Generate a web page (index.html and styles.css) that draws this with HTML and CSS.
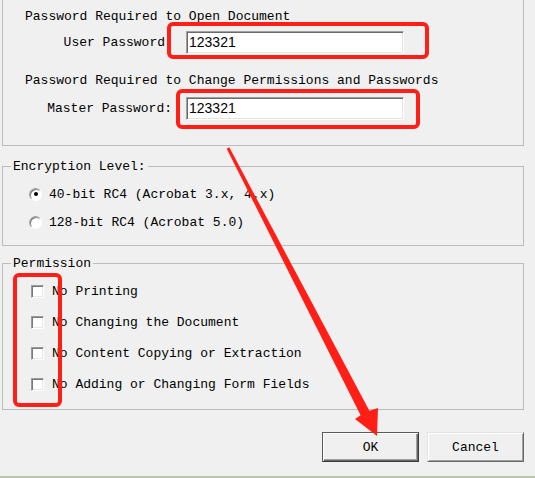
FILE: index.html
```html
<!DOCTYPE html>
<html>
<head>
<meta charset="utf-8">
<link rel="stylesheet" href="styles.css">
</head>
<body>
<div class="dialog">
  <section class="group group-pw">
    <div class="heading">Password Required to Open Document</div>
    <div class="field-row">
      <label class="field-label label-user">User Password</label>
      <div class="text-input">123321</div>
    </div>
    <div class="heading heading-2">Password Required to Change Permissions and Passwords</div>
    <div class="field-row field-row-master">
      <label class="field-label label-master">Master Password:</label>
      <div class="text-input">123321</div>
    </div>
  </section>

  <fieldset class="group group-enc">
    <legend>Encryption Level:</legend>
    <div class="option-row"><span class="radio checked"></span><span>40-bit RC4 (Acrobat 3.x, 4.x)</span></div>
    <div class="option-row"><span class="radio"></span><span>128-bit RC4 (Acrobat 5.0)</span></div>
  </fieldset>

  <fieldset class="group group-perm">
    <legend>Permission</legend>
    <div class="check-row"><span class="checkbox"></span><span>No Printing</span></div>
    <div class="check-row"><span class="checkbox"></span><span>No Changing the Document</span></div>
    <div class="check-row"><span class="checkbox"></span><span>No Content Copying or Extraction</span></div>
    <div class="check-row"><span class="checkbox"></span><span>No Adding or Changing Form Fields</span></div>
  </fieldset>

  <div class="buttons">
    <button class="btn btn-default">OK</button>
    <button class="btn">Cancel</button>
  </div>
</div>
<div class="footer-line"></div>

<svg class="annotations" width="535" height="478" viewBox="0 0 535 478">
  <rect x="169" y="24" width="258" height="33" rx="4" ry="4" fill="none" stroke="#ff1f17" stroke-width="4"/>
  <rect x="178" y="91" width="240" height="36" rx="4" ry="4" fill="none" stroke="#ff1f17" stroke-width="4"/>
  <rect x="15" y="275" width="45" height="130" rx="4" ry="4" fill="none" stroke="#ff1f17" stroke-width="4"/>
  <polygon fill="#ff1f17" points="229.3,147.3 369.4,410.7 378,408 377,436 355,419 360.6,415.3 226.7,148.7"/>
</svg>
</body>
</html>
```

FILE: styles.css
```css
* {
  box-sizing: border-box;
}

html, body {
  margin: 0;
  padding: 0;
}

body {
  width: 535px;
  height: 478px;
  overflow: hidden;
  position: relative;
  background: #f0f0f0;
  font-family: "Liberation Mono", "DejaVu Sans Mono", monospace;
  font-size: 13px;
  line-height: 15px;
  color: #000;
  display: flex;
  flex-direction: column;
}

.dialog {
  flex: 1;
  width: 524px;
  padding-left: 2px;
  display: flex;
  flex-direction: column;
}

.group {
  width: 522px;
  margin: 0;
  border: 1px solid #bcbcbc;
  min-inline-size: 0;
}

.group-pw {
  margin-top: -20px;
  padding: 28px 0 25px 0;
}

.heading {
  margin-left: 22px;
  height: 15px;
  white-space: nowrap;
}

.heading-2 {
  margin-top: 19px;
}

.field-row {
  display: flex;
  align-items: center;
  margin-top: 7px;
}

.field-row-master {
  margin-top: 9px;
}

.field-label {
  width: 183px;
  text-align: right;
  white-space: nowrap;
}

.label-user {
  padding-right: 21px;
}

.label-master {
  padding-right: 14px;
}

.text-input {
  width: 218px;
  height: 23px;
  background: #fff;
  border: 1px solid;
  border-color: #a0a0a0 #ffffff #ffffff #a0a0a0;
  box-shadow: inset 1px 1px 0 #6a6a6a, inset -1px -1px 0 #e3e3e3;
  font-family: "Liberation Sans", Arial, sans-serif;
  font-size: 14px;
  line-height: 21px;
  padding-left: 2px;
}

fieldset.group {
  padding: 10px 8px 13px 8px;
}

fieldset.group legend {
  padding: 0 2px;
  line-height: 15px;
  height: 15px;
}

.group-enc {
  margin-top: 13px;
}

.group-perm {
  margin-top: 10px;
}

fieldset.group-perm {
  padding-bottom: 15px;
}

.option-row,
.check-row {
  display: flex;
  align-items: center;
  height: 20px;
  white-space: nowrap;
}

.option-row {
  padding-left: 18px;
  gap: 7px;
}

.option-row + .option-row {
  margin-top: 8px;
}

.check-row {
  padding-left: 20px;
  gap: 8px;
}

.check-row + .check-row {
  margin-top: 11px;
}

.radio {
  width: 13px;
  height: 13px;
  border-radius: 50%;
  background: #fff;
  border: 1px solid;
  border-color: #a0a0a0 #ffffff #ffffff #a0a0a0;
  box-shadow: inset 1px 1px 0 #7a7a7a;
  display: flex;
  align-items: center;
  justify-content: center;
  flex: none;
}

.radio.checked::after {
  content: "";
  width: 4px;
  height: 4px;
  border-radius: 50%;
  background: #000;
}

.checkbox {
  width: 13px;
  height: 13px;
  background: #fff;
  border: 1px solid;
  border-color: #9a9a9a #ffffff #ffffff #9a9a9a;
  box-shadow: inset 1px 1px 0 #7a7a7a, inset -1px -1px 0 #e8e8e8;
  flex: none;
}

.buttons {
  display: flex;
  justify-content: flex-end;
  gap: 8px;
  margin-top: 22px;
}

.btn {
  width: 97px;
  height: 30px;
  margin: 0;
  padding: 0;
  font-family: "Liberation Mono", "DejaVu Sans Mono", monospace;
  font-size: 13px;
  color: #000;
  background: #f0f0f0;
  border: 1px solid;
  border-color: #e3e3e3 #696969 #696969 #e3e3e3;
  box-shadow: inset 1px 1px 0 #ffffff, inset -1px -1px 0 #a0a0a0;
}

.btn-default {
  border-color: #5a5a5a #3a3a3a #3a3a3a #5a5a5a;
  box-shadow: inset 1px 1px 0 #ffffff, inset -1px -1px 0 #696969, inset -2px -2px 0 #a0a0a0;
}

.footer-line {
  height: 2px;
  background: #bcc8a4;
  flex: none;
}

.annotations {
  position: absolute;
  left: 0;
  top: 0;
  pointer-events: none;
}
```
